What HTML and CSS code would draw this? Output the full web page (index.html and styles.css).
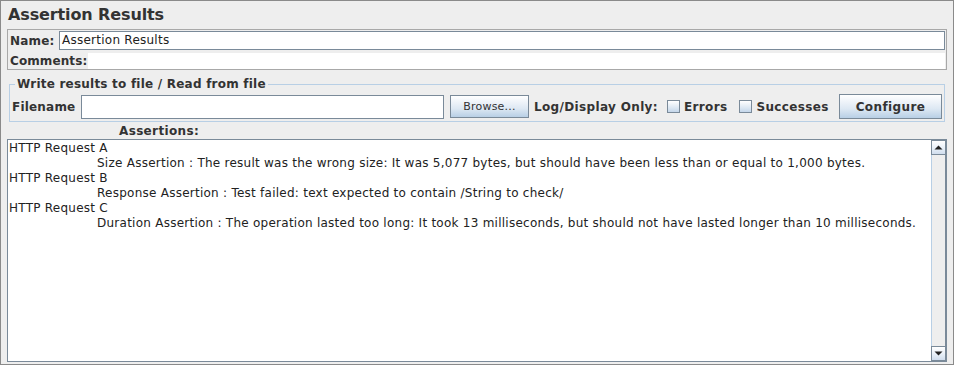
FILE: index.html
```html
<!DOCTYPE html>
<html>
<head>
<meta charset="utf-8">
<link rel="stylesheet" href="styles.css">
</head>
<body>
<div class="frame">
  <div class="title">Assertion Results</div>
  <div class="name-panel">
    <div class="name-row">
      <span class="lbl name-lbl">Name:</span>
      <div class="field name-field">Assertion Results</div>
    </div>
    <div class="comments-row">
      <span class="lbl comments-lbl">Comments:</span>
      <div class="comments-area"></div>
    </div>
  </div>
  <fieldset class="file-panel">
    <legend class="lbl">Write results to file / Read from file</legend>
    <div class="file-row">
      <span class="lbl filename-lbl">Filename</span>
      <div class="field file-field"></div>
      <div class="btn browse">Browse...</div>
      <span class="lbl log-lbl">Log/Display Only:</span>
      <span class="check errors-check"></span>
      <span class="lbl check-lbl">Errors</span>
      <span class="check succ-check"></span>
      <span class="lbl check-lbl">Successes</span>
      <div class="btn configure">Configure</div>
    </div>
  </fieldset>
  <div class="lbl assert-lbl">Assertions:</div>
  <div class="results">
    <div class="results-text">
      <div class="line">HTTP Request A</div>
      <div class="line sub">Size Assertion : The result was the wrong size: It was 5,077 bytes, but should have been less than or equal to 1,000 bytes.</div>
      <div class="line">HTTP Request B</div>
      <div class="line sub">Response Assertion : Test failed: text expected to contain /String to check/</div>
      <div class="line">HTTP Request C</div>
      <div class="line sub">Duration Assertion : The operation lasted too long: It took 13 milliseconds, but should not have lasted longer than 10 milliseconds.</div>
    </div>
    <div class="scrollbar">
      <div class="sb-btn"><svg width="9" height="5" viewBox="0 0 9 5"><path d="M0.5 4.5 L4.5 0.5 L8.5 4.5 Z" fill="#222"/></svg></div>
      <div class="sb-track"></div>
      <div class="sb-btn"><svg width="9" height="5" viewBox="0 0 9 5"><path d="M0.5 0.5 L4.5 4.5 L8.5 0.5 Z" fill="#222"/></svg></div>
    </div>
  </div>
</div>
</body>
</html>
```
FILE: styles.css
```css
* { box-sizing: border-box; }
html, body { margin: 0; padding: 0; }
body {
  font-family: "DejaVu Sans", "Liberation Sans", sans-serif;
  font-size: 12px;
  color: #333;
  background: #eeeeee;
}
.frame {
  width: 954px;
  height: 365px;
  border: 1px solid #8a8a8a;
  background: #eeeeee;
  padding: 0 6px 2px 6px;
  display: flex;
  flex-direction: column;
}
.lbl { font-weight: bold; color: #333; white-space: nowrap; letter-spacing: 0.35px; }
.title {
  height: 28px;
  line-height: 28px;
  font-size: 16px;
  font-weight: bold;
  padding-left: 1px;
  color: #333;
  letter-spacing: -0.12px;
}
.name-panel {
  height: 41px;
  border: 1px solid #a8a8a8;
  display: flex;
  flex-direction: column;
  gap: 1px;
}
.name-row {
  height: 21px;
  display: flex;
  align-items: center;
  padding: 1px 1px 1px 2px;
}
.name-lbl { width: 49px; letter-spacing: 0.2px; }
.field {
  background: #fff;
  border: 1px solid #7a8a99;
}
.name-field {
  flex: 1;
  height: 19px;
  line-height: 17px;
  padding-left: 2px;
  color: #222;
  letter-spacing: 0.25px;
}
.comments-row {
  height: 17px;
  display: flex;
  align-items: stretch;
  padding: 0 1px 0 2px;
}
.comments-lbl { width: 78px; line-height: 18px; letter-spacing: 0.1px; }
.comments-area { flex: 1; background: #fff; margin-top: 1px; }
.file-panel {
  margin: 7px 2px 0 2px;
  padding: 0 2px 2px 1px;
  border: 1px solid #b8cfe5;
  min-width: 0;
}
.file-panel legend {
  margin-left: 4px;
  padding: 0 2px;
  line-height: 14px;
  height: 14px;
  letter-spacing: 0.22px;
}
.file-row {
  margin-top: 3px;
  height: 25px;
  display: flex;
  align-items: center;
}
.filename-lbl { width: 70px; padding-left: 1px; letter-spacing: 0.2px; }
.file-field { width: 363px; height: 24px; }
.btn {
  border: 1px solid #7a8a99;
  background: linear-gradient(#ffffff 0%, #eef3f9 30%, #dde8f3 60%, #b8cfe5 100%);
  display: flex;
  align-items: center;
  justify-content: center;
  color: #333;
}
.browse {
  margin-left: 6px;
  width: 79px;
  height: 23px;
  font-size: 11px;
  letter-spacing: 0.2px;
}
.log-lbl { margin-left: 5px; }
.check {
  width: 13px;
  height: 13px;
  border: 1px solid #7a8a99;
  background: linear-gradient(#ffffff, #dde8f3 60%, #c4d6ea);
  margin-right: 4px;
}
.errors-check { margin-left: 9px; }
.succ-check { margin-left: 12px; }
.configure {
  margin-left: auto;
  margin-right: 0;
  width: 103px;
  height: 25px;
  font-weight: bold;
  font-size: 12px;
  letter-spacing: 0.4px;
}
.assert-lbl {
  height: 17px;
  line-height: 15px;
  padding-top: 2px;
  padding-left: 112px;
}
.results {
  flex: 1;
  border: 1px solid #7a8a99;
  background: #fff;
  display: flex;
  min-height: 0;
}
.results-text {
  flex: 1;
  color: #222;
  padding-left: 1px;
  padding-top: 1px;
  overflow: hidden;
  letter-spacing: 0.25px;
}
.line { height: 15px; line-height: 15px; white-space: nowrap; }
.sub { padding-left: 88px; }
.scrollbar {
  width: 15px;
  display: flex;
  flex-direction: column;
  background: #eeeeee;
}
.sb-btn {
  height: 15px;
  border: 1px solid #7a8a99;
  background: linear-gradient(#ffffff, #e6eef7 60%, #d0dded);
  display: flex;
  align-items: center;
  justify-content: center;
}
.sb-track {
  flex: 1;
  border-left: 1px solid #b8cfe5;
  border-right: 1px solid #7a8a99;
  background: #eeeeee;
}
```
